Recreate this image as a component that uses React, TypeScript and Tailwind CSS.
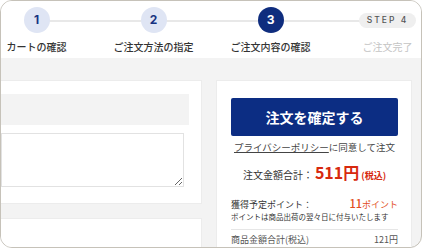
import React from 'react';

const font = "font-['Noto_Sans_CJK_JP','Noto_Sans',sans-serif]";

const steps = [
  { no: '1', label: 'カートの確認', state: 'done' },
  { no: '2', label: 'ご注文方法の指定', state: 'done' },
  { no: '3', label: 'ご注文内容の確認', state: 'current' },
  { no: '4', label: 'ご注文完了', state: 'todo' },
];

const StepBar: React.FC = () => (
  <div className="relative h-[57px] bg-white shrink-0">
    {/* connecting line */}
    <div className="absolute top-[19px] left-[36px] w-[350px] h-[2px] bg-[#e8e8e8]" />
    <div className="relative flex ml-[-23px] pt-[6px]">
      {steps.map((s) => (
        <div key={s.no} className="w-[117px] shrink-0 flex flex-col items-center">
          <div className="h-[26px] flex items-center justify-center">
            {s.state === 'todo' ? (
              <div className="w-[57px] h-[15px] rounded-full bg-[#efefef] flex items-center justify-center text-[8.5px] tracking-[2px] font-medium text-[#555] font-['Inter',sans-serif]">
                STEP 4
              </div>
            ) : (
              <div
                className={
                  s.state === 'current'
                    ? "w-[26px] h-[26px] rounded-full bg-[#0f2d7e] text-white flex items-center justify-center text-[12px] font-bold font-['Inter',sans-serif]"
                    : "w-[26px] h-[26px] rounded-full bg-[#dfe5f4] text-[#173381] flex items-center justify-center text-[12px] font-bold font-['Inter',sans-serif]"
                }
              >
                {s.no}
              </div>
            )}
          </div>
          <div
            className={
              s.state === 'todo'
                ? 'mt-[7px] text-[10px] leading-[14px] text-[#c4c4c4] whitespace-nowrap'
                : 'mt-[7px] text-[10px] leading-[14px] font-medium text-[#333] whitespace-nowrap'
            }
          >
            {s.label}
          </div>
        </div>
      ))}
    </div>
  </div>
);

const App: React.FC = () => {
  return (
    <div className={`w-[425px] h-[250px] bg-white ${font}`}>
      <div className="w-[422px] h-[248px] rounded-[12px] border border-[#c6c2b9] overflow-hidden flex flex-col bg-[#f3f3f3]">
        <StepBar />

        <div className="flex gap-[14px] pt-[22px] pr-[9px]">
          {/* Left column */}
          <div className="w-[201px] shrink-0 flex flex-col gap-[14px]">
            <div className="bg-white border border-l-0 border-[#ececec] pt-[13px] pr-[12px] pb-[16px]">
              <div className="h-[31px] bg-[#f3f3f3]" />
              <div className="mt-[8px] pr-[5px]">
                <textarea className="block w-full h-[54px] border border-[#e2e2e2] bg-white outline-none" />
              </div>
            </div>
            <div className="h-[40px] bg-white border border-l-0 border-[#ececec]" />
          </div>

          {/* Right column */}
          <div className="w-[196px] shrink-0 bg-white border border-[#ececec] pt-[17px] pl-[14px] pr-[13px] h-[180px]">
            <button className="w-full h-[38px] rounded-[2px] bg-[#0c2d83] text-white text-[14px] leading-[20px] font-bold">
              注文を確定する
            </button>
            <div className="mt-[4px] text-center text-[9.5px] leading-[14px] text-[#444] whitespace-nowrap">
              <span className="underline">プライバシーポリシー</span>に同意して注文
            </div>

            <div className="mt-[8px] flex items-baseline justify-center h-[20px] leading-[20px] whitespace-nowrap">
              <span className="text-[10px] leading-[20px] text-[#333]">注文金額合計：</span>
              <span className="text-[16px] leading-[20px] font-bold text-[#d7290e] ml-[2px]">511円</span>
              <span className="text-[9px] leading-[20px] font-bold text-[#d7290e] ml-[2px]">(税込)</span>
            </div>

            <div className="mt-[12px] flex items-baseline justify-between h-[14px] leading-[14px]">
              <span className="text-[9px] leading-[14px] text-[#333]">獲得予定ポイント：</span>
              <span className="text-[#e24d22] whitespace-nowrap leading-[14px]">
                <span className="text-[11px] leading-[14px] font-medium">11</span>
                <span className="text-[9px] leading-[14px]">ポイント</span>
              </span>
            </div>
            <div className="mt-[3px] text-[7.5px] leading-[12px] text-[#333] whitespace-nowrap">
              ポイントは商品出荷の翌々日に付与いたします
            </div>

            <div className="mt-[6px] h-px bg-[#e6e6e6]" />

            <div className="mt-[3px] flex items-center justify-between h-[14px] leading-[14px] text-[9px] text-[#555]">
              <span>商品金額合計(税込)</span>
              <span>121円</span>
            </div>
          </div>
        </div>
      </div>
    </div>
  );
};

export default App;
